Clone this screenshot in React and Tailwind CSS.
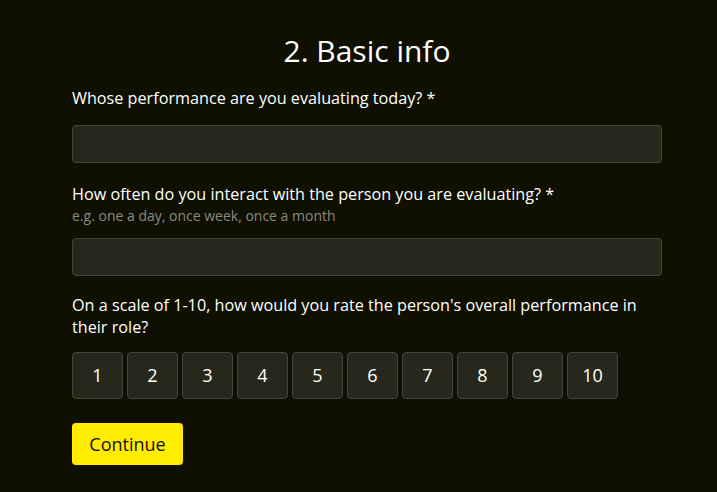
import React from 'react';

const App = () => {
  return (
    <div className="min-h-screen bg-[#0f0f02] text-white" style={{ fontFamily: '"Open Sans", sans-serif' }}>
      <div className="ml-[72px] w-[590px] pt-[29px]">
        {/* Title */}
        <h1 className="text-center text-[30px] leading-[44px] font-normal mb-[14px]">2. Basic info</h1>

        {/* Question 1 */}
        <label className="block text-[16.2px] leading-[22px] font-medium mb-[16px]">
          Whose performance are you evaluating today? *
        </label>
        <input className="block w-full h-[38px] rounded-[4px] border border-[#45453a] bg-[#27271c] outline-none mb-[20px]" />

        {/* Question 2 */}
        <label className="block text-[16.2px] leading-[22px] font-medium">
          How often do you interact with the person you are evaluating? *
        </label>
        <p className="text-[14px] leading-[22px] text-[#8a8a80] mb-[11px]">e.g. one a day, once week, once a month</p>
        <input className="block w-full h-[38px] rounded-[4px] border border-[#45453a] bg-[#27271c] outline-none mb-[18px]" />

        {/* Question 3 */}
        <label className="block text-[16.2px] leading-[22px] font-medium mb-[14px]">
          On a scale of 1-10, how would you rate the person's overall performance in their role?
        </label>
        <div className="flex gap-[4px] mb-[24px]">
          {[1, 2, 3, 4, 5, 6, 7, 8, 9, 10].map((n) => (
            <button
              key={n}
              className="w-[51px] h-[47px] rounded-[4px] border border-[#45453a] bg-[#27271c] text-[18px] font-medium text-white"
            >
              {n}
            </button>
          ))}
        </div>

        <button className="w-[111px] h-[42px] rounded-[4px] bg-[#ffec00] text-[#111106] text-[18px]">
          Continue
        </button>
      </div>
    </div>
  );
};

export default App;
